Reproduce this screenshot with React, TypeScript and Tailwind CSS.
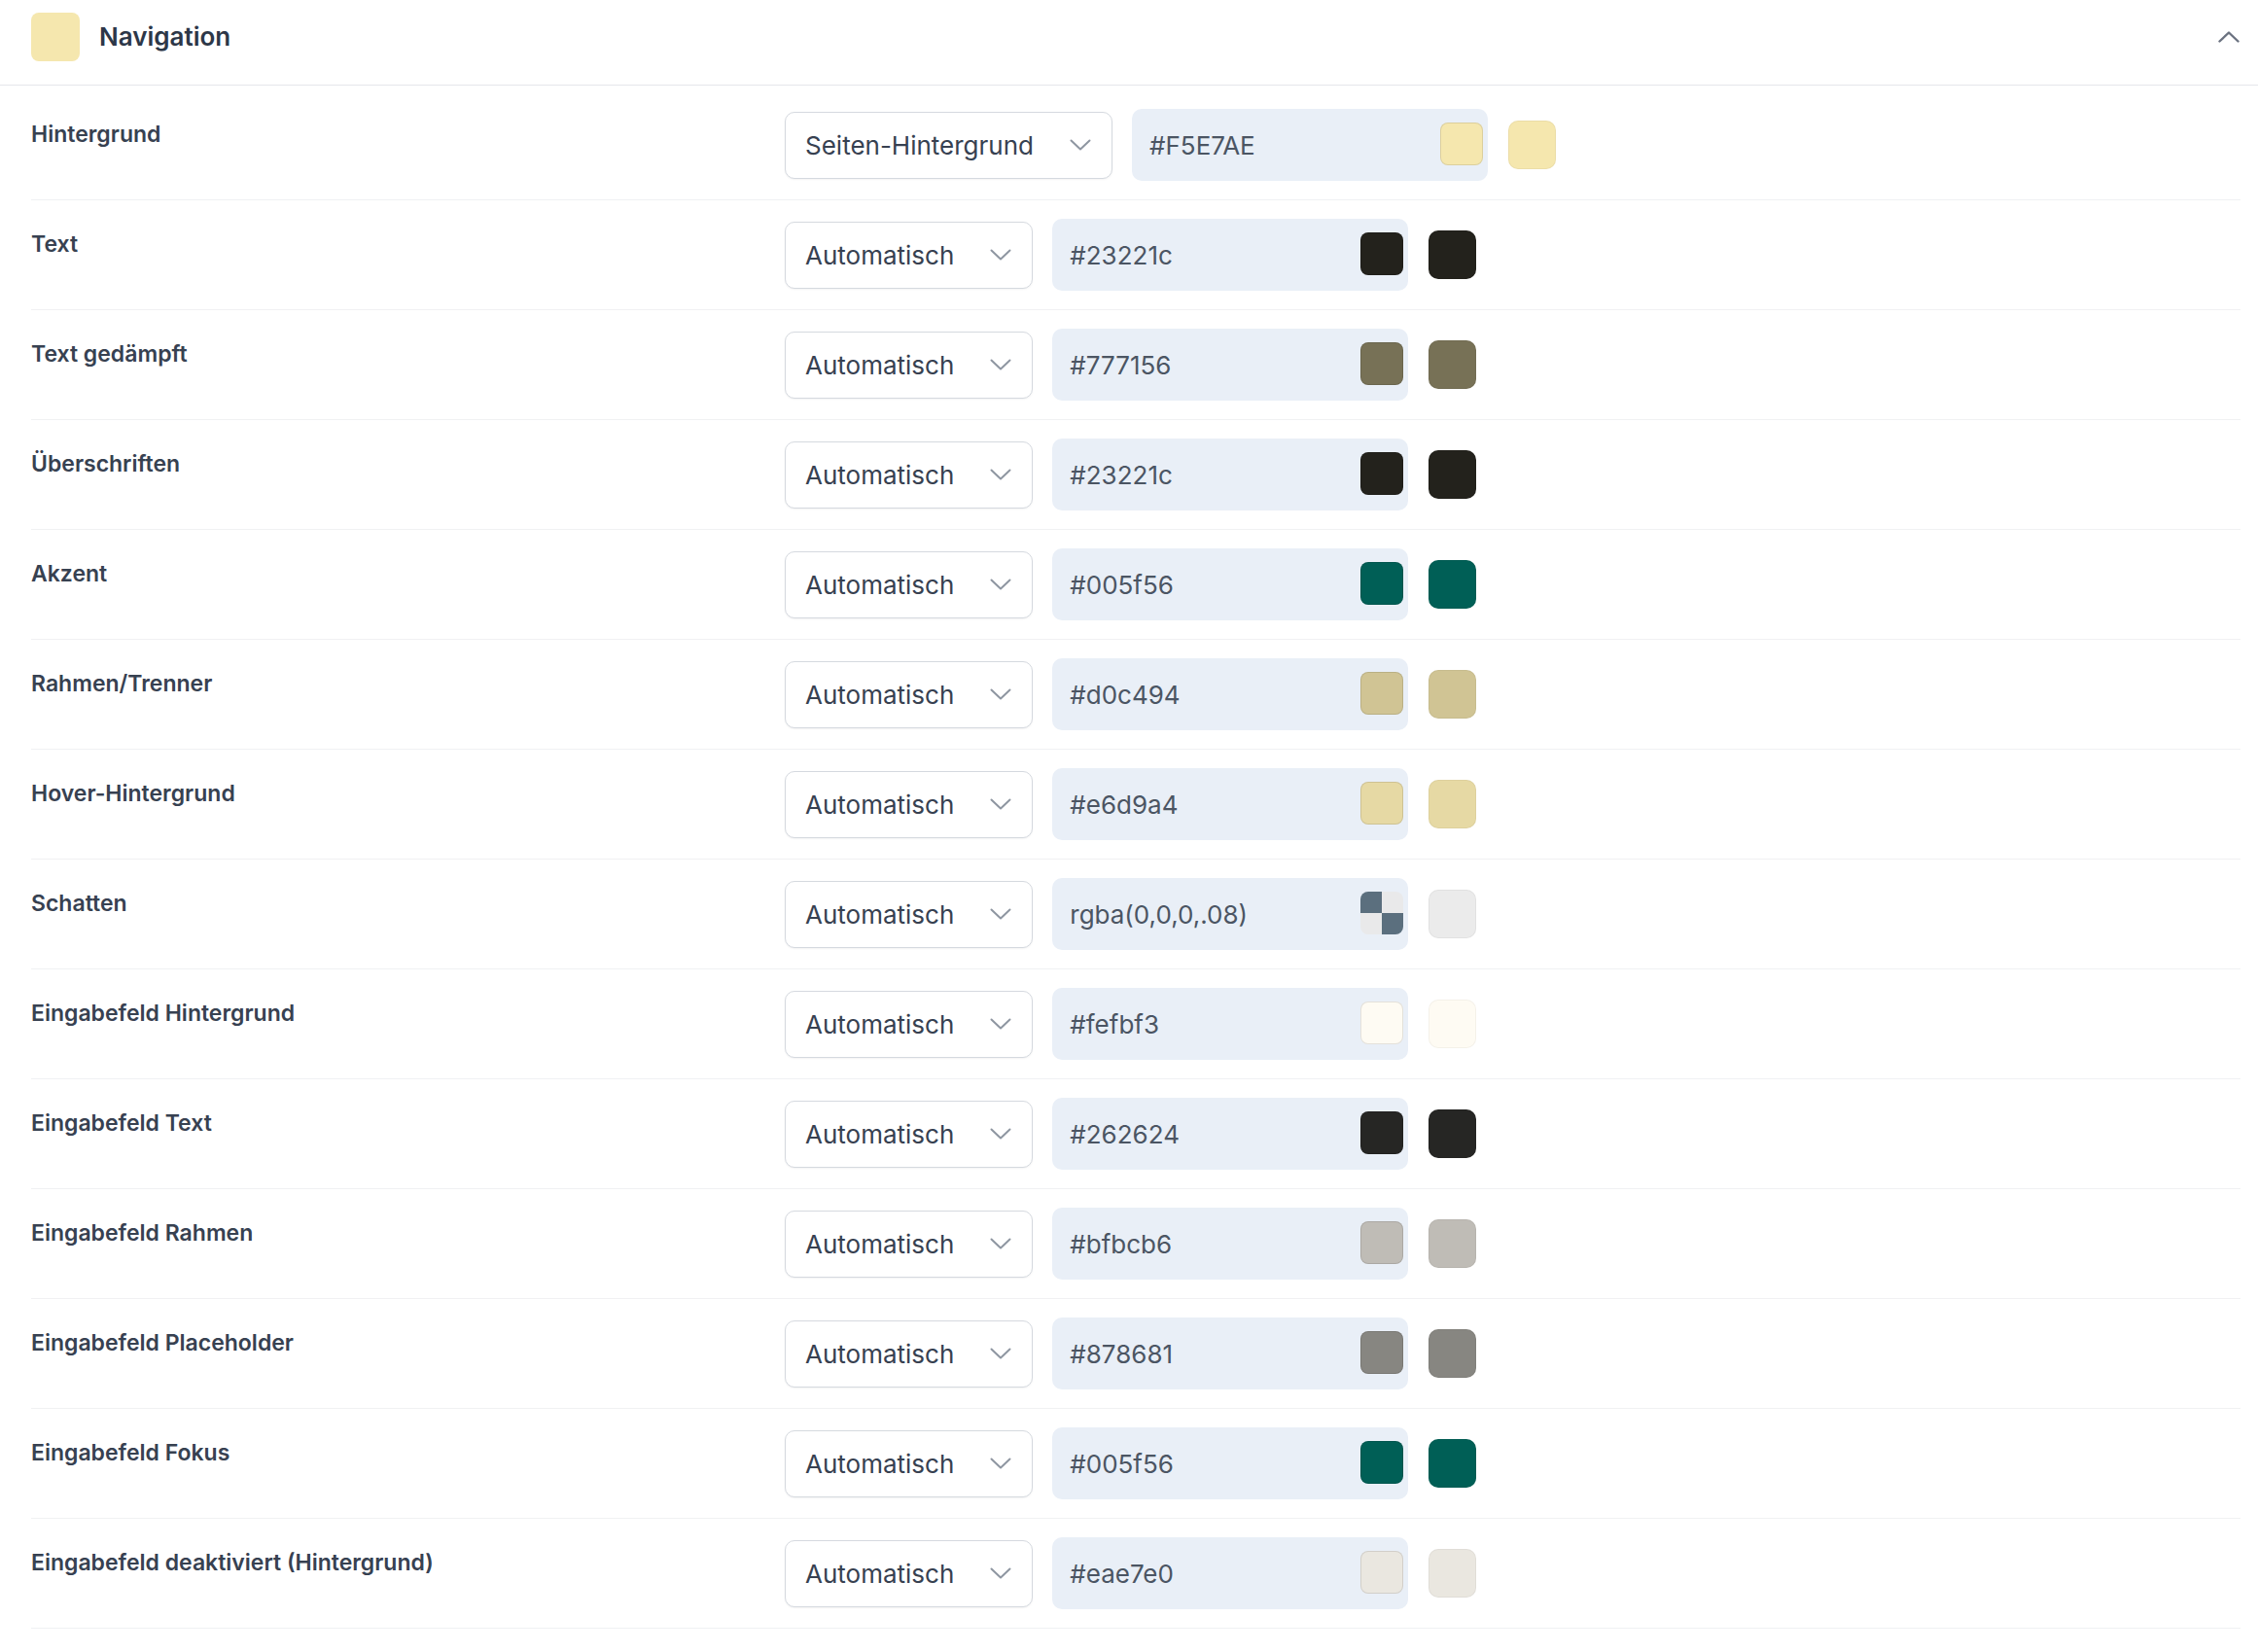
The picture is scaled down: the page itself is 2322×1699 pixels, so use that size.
import React from "react";

type Row = {
  label: string;
  mode: string;
  value: string;
  color: string;
  checker?: boolean;
};

const rows: Row[] = [
  { label: "Hintergrund", mode: "Seiten-Hintergrund", value: "#F5E7AE", color: "#F5E7AE" },
  { label: "Text", mode: "Automatisch", value: "#23221c", color: "#23221c" },
  { label: "Text gedämpft", mode: "Automatisch", value: "#777156", color: "#777156" },
  { label: "Überschriften", mode: "Automatisch", value: "#23221c", color: "#23221c" },
  { label: "Akzent", mode: "Automatisch", value: "#005f56", color: "#005f56" },
  { label: "Rahmen/Trenner", mode: "Automatisch", value: "#d0c494", color: "#d0c494" },
  { label: "Hover-Hintergrund", mode: "Automatisch", value: "#e6d9a4", color: "#e6d9a4" },
  { label: "Schatten", mode: "Automatisch", value: "rgba(0,0,0,.08)", color: "rgba(0,0,0,.08)", checker: true },
  { label: "Eingabefeld Hintergrund", mode: "Automatisch", value: "#fefbf3", color: "#fefbf3" },
  { label: "Eingabefeld Text", mode: "Automatisch", value: "#262624", color: "#262624" },
  { label: "Eingabefeld Rahmen", mode: "Automatisch", value: "#bfbcb6", color: "#bfbcb6" },
  { label: "Eingabefeld Placeholder", mode: "Automatisch", value: "#878681", color: "#878681" },
  { label: "Eingabefeld Fokus", mode: "Automatisch", value: "#005f56", color: "#005f56" },
  { label: "Eingabefeld deaktiviert (Hintergrund)", mode: "Automatisch", value: "#eae7e0", color: "#eae7e0" },
];

function ChevronDown() {
  return (
    <svg width="22" height="12" viewBox="0 0 22 12" fill="none" className="shrink-0">
      <polyline points="1.5,1.5 11,10.5 20.5,1.5" stroke="#8e96a1" strokeWidth="2" strokeLinecap="round" strokeLinejoin="round" />
    </svg>
  );
}

function ChevronUp() {
  return (
    <svg width="22" height="12" viewBox="0 0 22 12" fill="none">
      <polyline points="1.5,10.5 11,1.5 20.5,10.5" stroke="#6b7280" strokeWidth="2.4" strokeLinecap="round" strokeLinejoin="round" />
    </svg>
  );
}

function Select({ value }: { value: string }) {
  return (
    <div className="flex h-[69px] items-center gap-[37px] rounded-[10px] border border-[#d5d9df] bg-white pl-[20px] pr-[21px] shadow-[0_1px_2px_rgba(0,0,0,0.05)]">
      <span className="text-[26px] text-[#374151]">{value}</span>
      <ChevronDown />
    </div>
  );
}

function InnerSwatch({ color, checker }: { color: string; checker?: boolean }) {
  if (checker) {
    return (
      <div className="mb-[3px] grid h-[44px] w-[44px] grid-cols-2 grid-rows-2 overflow-hidden rounded-[8px]">
        <div className="bg-[#5b6f7e]" />
        <div className="bg-[#e9e9ea]" />
        <div className="bg-[#e9e9ea]" />
        <div className="bg-[#5b6f7e]" />
      </div>
    );
  }
  return (
    <div
      className="mb-[3px] h-[44px] w-[44px] rounded-[8px] border border-black/10"
      style={{ backgroundColor: color }}
    />
  );
}

function ColorField({ value, color, checker }: { value: string; color: string; checker?: boolean }) {
  return (
    <div className="flex h-[74px] w-[366px] items-center justify-between rounded-[10px] bg-[#e9eff7] pl-[18px] pr-[5px]">
      <span className="text-[26px] text-[#4b5563]">{value}</span>
      <InnerSwatch color={color} checker={checker} />
    </div>
  );
}

function SettingRow({ row }: { row: Row }) {
  return (
    <div className="flex items-start border-b border-[#f0f1f3] py-[19px]">
      <div className="w-[775px] shrink-0 pt-[10px] text-[23px] font-semibold leading-[33px] text-[#374151]">
        {row.label}
      </div>
      <div className="flex items-center gap-[20px]">
        <Select value={row.mode} />
        <ColorField value={row.value} color={row.color} checker={row.checker} />
        <div
          className="ml-[1px] h-[50px] w-[49px] rounded-[10px] border border-black/[0.04]"
          style={{ backgroundColor: row.checker ? "#ebebeb" : row.color }}
        />
      </div>
    </div>
  );
}

export default function App() {
  return (
    <div className="min-h-screen bg-white font-['Inter',sans-serif]">
      <header className="flex h-[88px] items-start border-b border-[#e5e7eb] pl-[32px] pr-[19px] pt-[13px]">
        <div className="h-[50px] w-[50px] rounded-[8px] bg-[#F5E7AE]" />
        <span className="ml-[20px] text-[26px] font-semibold leading-[50px] text-[#2d3748]">Navigation</span>
        <button className="ml-auto flex h-[50px] items-center" aria-label="Einklappen">
          <ChevronUp />
        </button>
      </header>
      <div className="pl-[32px] pr-[18px] pt-[5px]">
        {rows.map((row) => (
          <SettingRow key={row.label} row={row} />
        ))}
      </div>
    </div>
  );
}
